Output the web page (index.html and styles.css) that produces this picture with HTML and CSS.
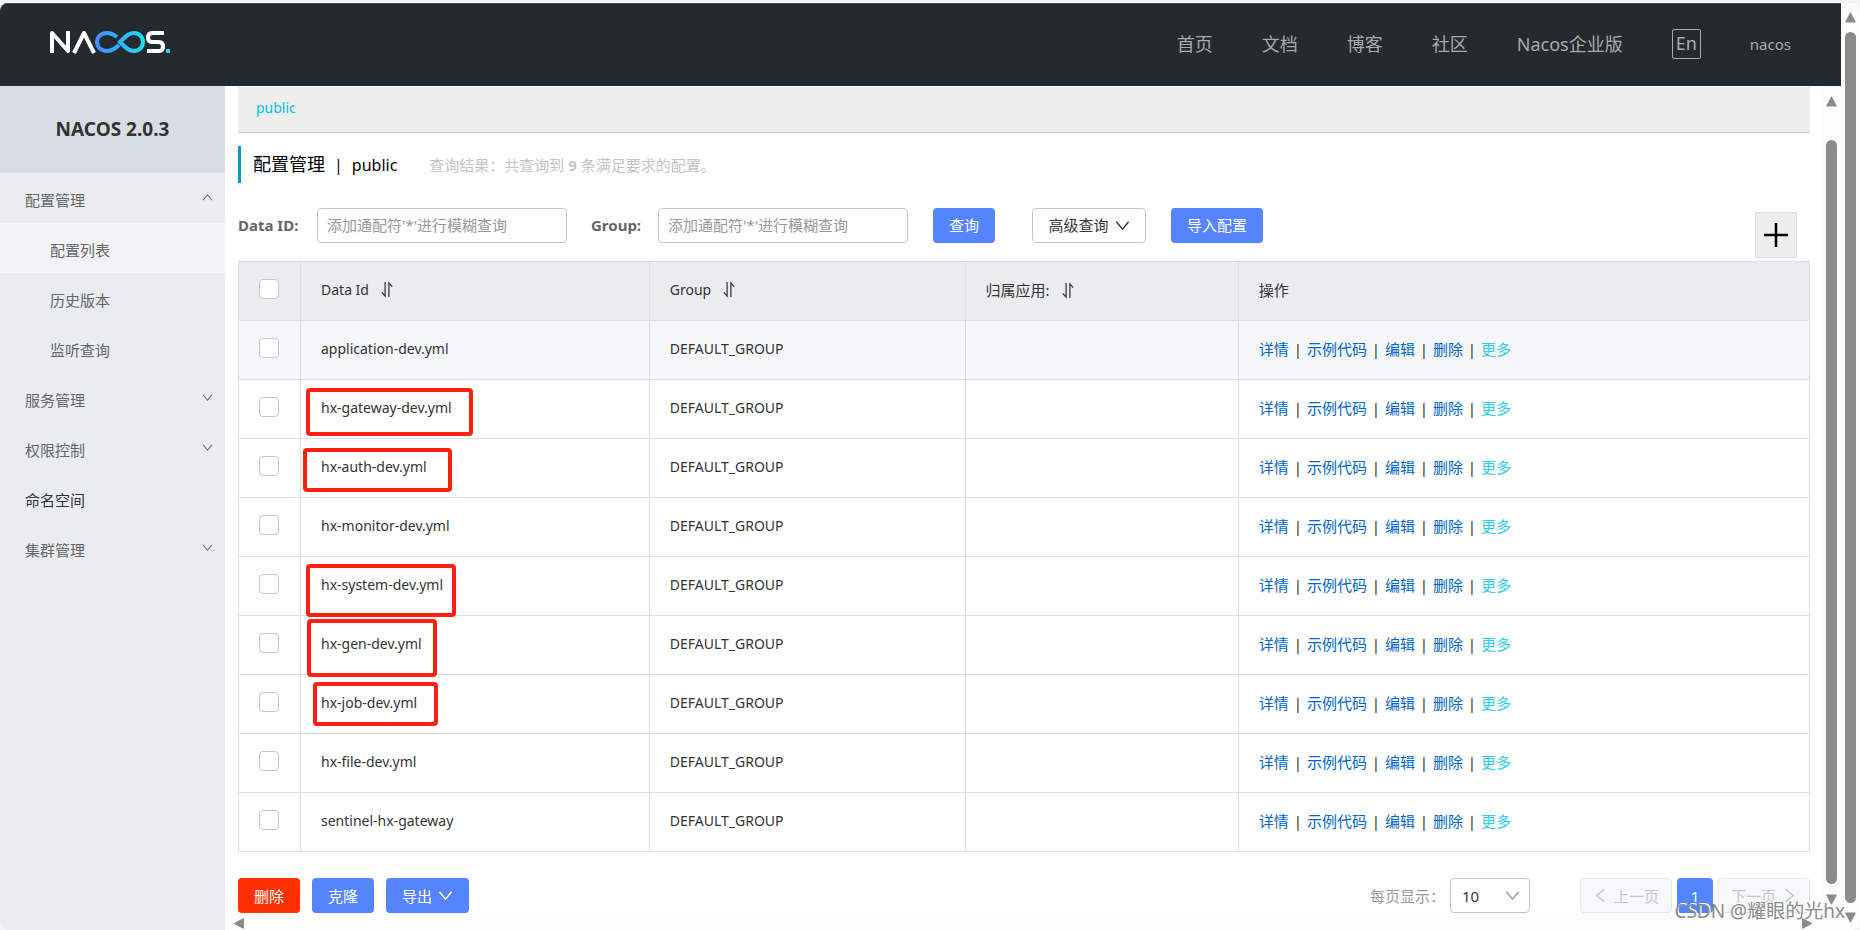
FILE: index.html
```html
<!DOCTYPE html>
<html lang="zh-CN">
<head>
<meta charset="utf-8">
<title>Nacos</title>
<link rel="stylesheet" href="styles.css">
</head>
<body>
<svg class="defs" aria-hidden="true">
  <symbol id="chev" viewBox="0 0 16 16"><path d="M1.500 4 L8 12 L14.500 4" fill="none" stroke="currentColor" stroke-width="1.500"/></symbol>
  <symbol id="sort" viewBox="0 0 14 18"><path d="M5 1V16L1.500 12M9 17V2L12.500 6" fill="none" stroke="currentColor" stroke-width="1.300"/></symbol>
  <symbol id="tri" viewBox="0 0 10 10"><path d="M5 1L9.300 9H0.700Z" fill="#8b8b8b" stroke="#8b8b8b" stroke-linejoin="round"/></symbol>
</svg>
<div class="window">
  <div class="app">
    <header class="header">
      <a href="#" class="logo" aria-label="NACOS">
        <svg width="122" height="24" viewBox="0 0 122 24" fill="none">
          <defs><linearGradient id="g" gradientUnits="userSpaceOnUse" x1="45" y1="0" x2="95" y2="0"><stop offset="0" stop-color="#4a87ff"/><stop offset="1" stop-color="#12e4f5"/></linearGradient></defs>
          <path d="M2 23V3L18 21V1M24 23L34 3L44 23" stroke="#fff" stroke-width="4" stroke-linejoin="round"/>
          <path d="M67 7C63 4 61 3 57 3C51 3 47 7 47 12S51 21 57 21C62 21 65 19 69 15M84 21C79 21 76 18 70 12C76 6 79 3 84 3C89 3 93 7 93 12S89 21 84 21Z" stroke="url(#g)" stroke-width="4"/>
          <path d="M114 3H102C99 3 98 5 98 7.500S99 12 102 12H109C112 12 113 14 113 16.500S112 21 109 21H97" stroke="#fff" stroke-width="4"/>
          <rect x="116" y="19" width="4" height="4" rx="1" fill="#12e4f5"/>
        </svg>
      </a>
      <nav class="nav">
        <a href="#">首页</a><a href="#">文档</a><a href="#">博客</a><a href="#">社区</a><a href="#">Nacos企业版</a>
        <button class="lang" type="button">En</button>
        <a href="#" class="user">nacos</a>
      </nav>
    </header>
    <div class="body">
      <aside class="side">
        <h1 class="version">NACOS 2.0.3</h1>
        <nav class="menu">
          <a href="#">配置管理<svg class="up"><use href="#chev"/></svg></a>
          <a href="#" class="sub active">配置列表</a>
          <a href="#" class="sub">历史版本</a>
          <a href="#" class="sub">监听查询</a>
          <a href="#">服务管理<svg><use href="#chev"/></svg></a>
          <a href="#">权限控制<svg><use href="#chev"/></svg></a>
          <a href="#" class="dark">命名空间</a>
          <a href="#">集群管理<svg><use href="#chev"/></svg></a>
        </nav>
      </aside>
      <div class="pane">
        <main class="main">
          <div class="ns"><a href="#">public</a></div>
          <div class="heading">
            <h2>配置管理<span class="sep">|</span><span class="name">public</span></h2>
            <p>查询结果：共查询到 <b>9</b> 条满足要求的配置。</p>
          </div>
          <form class="search">
            <label for="did">Data ID:</label>
            <input id="did" type="text" placeholder="添加通配符'*'进行模糊查询">
            <label for="grp" class="second">Group:</label>
            <input id="grp" type="text" placeholder="添加通配符'*'进行模糊查询">
            <button type="button" class="btn primary query">查询</button>
            <button type="button" class="btn advanced">高级查询<svg><use href="#chev"/></svg></button>
            <button type="button" class="btn primary import">导入配置</button>
            <button type="button" class="add" aria-label="新建配置"><svg width="26" height="26" viewBox="0 0 26 26"><path d="M13 1V25M1 13H25" stroke="#000" stroke-width="2.500"/></svg></button>
          </form>
          <table class="list">
            <colgroup><col class="c1"><col class="c2"><col class="c3"><col class="c4"><col></colgroup>
            <thead><tr><th><input type="checkbox" aria-label="全选"></th><th>Data Id<svg><use href="#sort"/></svg></th><th>Group<svg><use href="#sort"/></svg></th><th class="zh">归属应用:<svg><use href="#sort"/></svg></th><th class="zh">操作</th></tr></thead>
            <tbody id="rows"></tbody>
          </table>
          <div class="foot">
            <button type="button" class="btn danger">删除</button>
            <button type="button" class="btn primary">克隆</button>
            <button type="button" class="btn primary">导出<svg><use href="#chev"/></svg></button>
            <div class="pager">
              <label for="size">每页显示：</label>
              <span class="select"><select id="size"><option>10</option></select><svg><use href="#chev"/></svg></span>
              <button type="button" class="btn page" disabled><svg class="left"><use href="#chev"/></svg>上一页</button>
              <button type="button" class="btn primary current">1</button>
              <button type="button" class="btn page" disabled>下一页<svg class="right"><use href="#chev"/></svg></button>
            </div>
          </div>
        </main>
        <div class="bar inner"><svg><use href="#tri"/></svg><i></i><svg class="down"><use href="#tri"/></svg></div>
        <div class="hbar"><svg class="left"><use href="#tri"/></svg><svg class="right"><use href="#tri"/></svg></div>
      </div>
    </div>
  </div>
  <div class="bar outer"><svg><use href="#tri"/></svg><i></i><svg class="down"><use href="#tri"/></svg></div>
  <div class="watermark">CSDN @耀眼的光hx</div>
</div>
<script src="rows.js"></script>
</body>
</html>
```
FILE: rows.js
```js
const rows = [
  ["application-dev.yml"],
  ["hx-gateway-dev.yml", "gateway"],
  ["hx-auth-dev.yml", "auth"],
  ["hx-monitor-dev.yml"],
  ["hx-system-dev.yml", "system"],
  ["hx-gen-dev.yml", "gen"],
  ["hx-job-dev.yml", "job"],
  ["hx-file-dev.yml"],
  ["sentinel-hx-gateway"]
];
document.getElementById("rows").innerHTML = rows.map(([name, mark]) => `<tr>
  <td><input type="checkbox" aria-label="${name}"></td>
  <td>${name}${mark ? `<span class="mark ${mark}"></span>` : ""}</td>
  <td>DEFAULT_GROUP</td><td></td>
  <td><div class="ops"><a href="#">详情</a><i>|</i><a href="#">示例代码</a><i>|</i><a href="#">编辑</a><i>|</i><a href="#">删除</a><i>|</i><a href="#" class="more">更多</a></div></td>
</tr>`).join("");
```
FILE: styles.css
```css
* { box-sizing: border-box; }
body { margin: 0; background: #f3f3f3; color: #333; font: 15px/20px "Noto Sans", "Noto Sans CJK SC", sans-serif; }
a { text-decoration: none; color: inherit; }
button, input, select { font: inherit; }
h1, h2, p { margin: 0; }
.defs { position: absolute; width: 0; height: 0; }
.window { position: relative; display: flex; height: 100vh; padding-top: 3px; }
.app { flex: 1; min-width: 0; display: flex; flex-direction: column; background: #fff; border-radius: 8px 0 0 8px; overflow: hidden; }
.header { display: flex; align-items: center; justify-content: space-between; height: 83px; flex: none; padding: 0 50px 2px; background: #252a2f; border-top: 1px solid #4b4f53; }
.logo { display: flex; padding-bottom: 4px; }
.nav { display: flex; align-items: center; gap: 49px; font-size: 18px; line-height: 24px; color: #a8aaac; }
.lang { height: 30px; padding: 0 3px 2px; border: 1px solid #a8aaac; border-radius: 2px; background: none; color: inherit; line-height: 24px; }
.nav .user { font-size: 15px; }
.body { flex: 1; min-height: 0; display: flex; }
.side { width: 225px; flex: none; background: #e9edf1; }
.version { height: 87px; padding-bottom: 2px; display: grid; place-items: center; background: #d8dde4; font-size: 19px; line-height: 24px; }
.menu a { display: flex; align-items: center; justify-content: space-between; height: 50px; padding: 4px 12px 0 25px; color: #666; }
.menu a.sub { padding-left: 50px; }
.menu a.active { background: #f1f3f7; }
.menu a.dark { color: #333; }
.menu svg { width: 11px; height: 11px; margin-bottom: 5px; }
.menu .up { transform: rotate(180deg); }
.pane { flex: 1; min-width: 0; display: grid; grid-template: minmax(0, 1fr) 17px / minmax(0, 1fr) 19px; }
.main { padding: 1px 12px 0 13px; display: flex; flex-direction: column; overflow: hidden; }
.ns { height: 46px; flex: none; padding: 11px 18px 0; background: #eee; border-bottom: 1px solid #ccc; color: #00c1de; font-size: 14px; }
.heading { display: flex; align-items: center; gap: 32px; height: 37px; flex: none; margin-top: 13px; padding-left: 12px; border-left: 3px solid #09c; color: #c4c4c4; }
.heading h2 { font-size: 18px; line-height: 24px; font-weight: 400; color: #000; }
.heading .sep { padding: 0 9px; font-size: 16px; }
.heading .name { font-size: 16px; }
.search { display: flex; align-items: center; height: 78px; flex: none; padding-top: 6px; }
.search label { width: 79px; font-weight: 700; color: #666; }
.search label.second { width: 67px; margin-left: 24px; }
.search input { width: 250px; height: 35px; padding: 0 9px; border: 1px solid #c4c6cf; border-radius: 4px; color: #333; }
.search input::placeholder { color: #999; }
.btn { display: flex; align-items: center; justify-content: center; gap: 6px; height: 35px; padding: 0 16px; border: 0; border-radius: 4px; color: #fff; white-space: nowrap; }
.btn svg { width: 15px; height: 15px; }
.primary { background: #5584ff; }
.danger { background: #ff3000; }
.query { margin-left: 25px; }
.advanced { width: 114px; margin-left: 37px; padding: 0; border: 1px solid #c4c6cf; background: #fff; color: #333; }
.import { margin-left: 25px; }
.add { display: grid; place-items: center; width: 42px; height: 46px; margin: 20px 13px 0 auto; padding: 0; border: 1px solid #ddd; background: #eee; }
.list { width: 100%; table-layout: fixed; border-collapse: collapse; }
.c1 { width: 62px; }
.c2 { width: 22.2%; }
.c3 { width: 20.1%; }
.c4 { width: 17.4%; }
.list th, .list td { position: relative; height: 59px; padding: 0 20px 2px; border: 1px solid #dcdee3; text-align: left; font-size: 14px; font-weight: 400; }
.list th { background: #ebecf0; }
.list .zh { font-size: 15px; }
.list th svg { width: 14px; height: 17px; margin-left: 11px; vertical-align: -3px; }
.list tbody tr:first-child { background: #f5f7f9; }
.list input { display: block; appearance: none; width: 20px; height: 20px; margin: 0 0 2px; border: 1px solid #c4c6cf; border-radius: 4px; background: #fff; }
.ops { display: flex; color: #333; font-size: 15px; }
.ops a { color: #06c; }
.ops i { width: 18px; text-align: center; font-style: normal; }
.ops .more { color: #33cde5; }
.mark { position: absolute; border: 4px solid #ff2012; border-radius: 4px; }
.gateway { left: 5px; top: 8px; width: 167px; height: 48px; }
.auth { left: 2px; top: 9px; width: 149px; height: 44px; }
.system { left: 5px; top: 7px; width: 150px; height: 53px; }
.gen { left: 6px; top: 3px; width: 130px; height: 58px; }
.job { left: 12px; top: 7px; width: 125px; height: 44px; }
.foot { display: flex; gap: 12px; margin-top: auto; }
.pager { display: flex; align-items: center; gap: 5px; margin-left: auto; color: #999; }
.select { position: relative; width: 80px; margin: 0 45px 0 0; }
.select select { width: 100%; height: 35px; padding: 0 11px; appearance: none; border: 1px solid #c4c6cf; border-radius: 4px; background: #fff; color: #333; }
.select svg { position: absolute; right: 10px; top: 10px; width: 15px; height: 15px; pointer-events: none; }
.page { width: 92px; padding: 0; border: 1px solid #e6e7eb; background: #f7f8fa; color: #c4c6cf; }
.current { width: 36px; padding: 0; }
.left { transform: rotate(90deg); }
.right { transform: rotate(-90deg); }
.bar { display: flex; flex-direction: column; align-items: center; background: #fcfcfc; }
.bar svg { width: 13px; height: 11px; flex: none; }
.bar i { flex: 1; width: 11px; border-radius: 6px; background: #8b8b8b; }
.down { transform: rotate(180deg); }
.outer { width: 19px; padding: 9px 0 7px; gap: 9px; border-radius: 0 8px 8px 0; }
.inner { padding: 10px 0 8px; gap: 10px; }
.inner i { margin-top: 23px; }
.hbar { grid-column: 1 / -1; display: flex; align-items: center; justify-content: space-between; padding: 3px 28px 0 8px; background: #fcfcfc; }
.hbar svg { width: 12px; height: 11px; }
.hbar .left { transform: rotate(-90deg); }
.hbar .right { transform: rotate(90deg); }
.watermark { position: absolute; right: 15px; bottom: 6px; font-size: 19px; line-height: 26px; color: #8b8b8b; text-shadow: 1px -1px 0 #fff; }
```
